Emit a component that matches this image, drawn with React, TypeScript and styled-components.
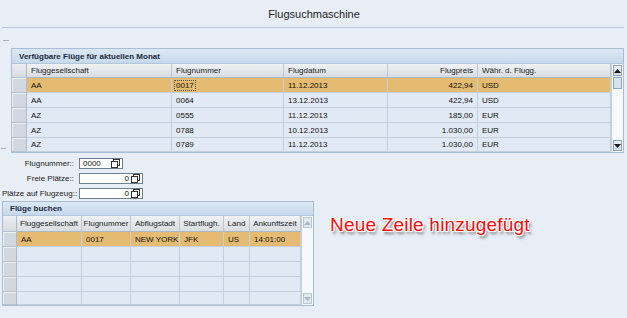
import React from "react";
import styled, { createGlobalStyle, css } from "styled-components";

const Global = createGlobalStyle`
  html, body { margin: 0; padding: 0; }
  body {
    background: #e8eef5;
    font-family: "Liberation Sans", Arial, sans-serif;
    width: 627px;
    height: 318px;
    overflow: hidden;
  }
`;

const Page = styled.div`
  display: flex;
  flex-direction: column;
  width: 627px;
  height: 318px;
`;

const TitleBar = styled.div`
  height: 27px;
  margin: 0 3px 0 2px;
  border-bottom: 1px solid #b7c8da;
  display: flex;
  align-items: center;
  justify-content: center;
  font-size: 11px;
  color: #222;
  padding-left: 2px;
`;

const Dash = styled.div<{ $w?: number }>`
  width: ${(p) => p.$w ?? 6}px;
  height: 1px;
  background: #a9b4bf;
`;

const TopDashRow = styled.div`
  height: 20px;
  padding-left: 3px;
  display: flex;
  align-items: flex-end;
  box-sizing: border-box;
  & > div { margin-bottom: 7px; }
`;

const PanelRow = styled.div`
  display: flex;
  align-items: flex-end;
`;

const Gutter = styled.div`
  width: 11px;
  display: flex;
  align-items: flex-end;
  padding-left: 1px;
  box-sizing: border-box;
  padding-bottom: 4px;
`;

const Panel = styled.div<{ $w: number }>`
  width: ${(p) => p.$w}px;
  box-sizing: border-box;
  border: 1px solid #a9bed4;
  background: #f2f6fa;
`;

const PanelTitle = styled.div<{ $h: number }>`
  height: ${(p) => p.$h}px;
  display: flex;
  align-items: center;
  padding-left: 7px;
  font-size: 8px;
  font-weight: bold;
  color: #1b2a3a;
  background: linear-gradient(#dbe8f5, #c6d9ec);
  border-bottom: 1px solid #b3c7dc;
`;

const PanelBody = styled.div`
  display: flex;
`;

const Grid = styled.div<{ $cols: string }>`
  flex: 1;
  display: grid;
  grid-template-columns: ${(p) => p.$cols};
`;

const HeadCell = styled.div<{ $h: number; $right?: boolean; $center?: boolean }>`
  height: ${(p) => p.$h}px;
  box-sizing: border-box;
  display: flex;
  align-items: center;
  justify-content: ${(p) => (p.$right ? "flex-end" : p.$center ? "center" : "flex-start")};
  padding: 0 4px;
  font-size: 8px;
  color: #222;
  background: linear-gradient(#f0f2f4, #d8dde2);
  border-right: 1px solid #bcc6d0;
  border-bottom: 1px solid #aab8c6;
  white-space: nowrap;
  overflow: hidden;
`;

const Cell = styled.div<{ $sel?: boolean; $right?: boolean; $h: number }>`
  height: ${(p) => p.$h}px;
  box-sizing: border-box;
  display: flex;
  align-items: center;
  justify-content: ${(p) => (p.$right ? "flex-end" : "flex-start")};
  padding: 0 4px;
  font-size: 8px;
  color: #111;
  background: ${(p) => (p.$sel ? "#e4bb70" : "#e1eaf4")};
  border-right: 1px solid #c4d0dc;
  border-bottom: 1px solid #c4d0dc;
  white-space: nowrap;
  overflow: hidden;
`;

const SelCell = styled.div<{ $h: number; $head?: boolean }>`
  height: ${(p) => p.$h}px;
  box-sizing: border-box;
  background: ${(p) => (p.$head ? "linear-gradient(#eceff2, #d6dbe0)" : "#d2d8df")};
  border-right: 1px solid #aebbc8;
  border-bottom: 1px solid #b6c2ce;
  ${(p) =>
    !p.$head &&
    css`
      box-shadow: inset 1px 1px 0 #eef1f4;
    `}
`;

const Focus = styled.span`
  outline: 1px dotted #555;
  outline-offset: 0px;
  padding: 0 1px;
  margin-left: -1px;
`;

const Scroll = styled.div`
  width: 12px;
  display: flex;
  flex-direction: column;
  background: #f6f9fc;
  border-left: 1px solid #c3d0dc;
  box-sizing: border-box;
`;

const ScrollBtn = styled.div<{ $dim?: boolean }>`
  height: 11px;
  margin: 1px;
  box-sizing: border-box;
  border: 1px solid ${(p) => (p.$dim ? "#b9c8d6" : "#8fa6bd")};
  background: ${(p) => (p.$dim ? "#dfe7ef" : "linear-gradient(#eef3f8, #cfdbe7)")};
  display: flex;
  align-items: center;
  justify-content: center;
`;

const Thumb = styled.div`
  height: 12px;
  margin: 0 1px;
  box-sizing: border-box;
  border: 1px solid #8fa6bd;
  background: #d6e2ee;
`;

const Track = styled.div`
  flex: 1;
`;

const Arrow = ({ down, dim }: { down?: boolean; dim?: boolean }) => (
  <svg width="7" height="4" viewBox="0 0 7 4">
    <polygon
      points={down ? "0,0 7,0 3.5,4" : "0,4 7,4 3.5,0"}
      fill={dim ? "#a9b8c7" : "#1a1a1a"}
    />
  </svg>
);

const CopyIcon = () => (
  <svg width="9" height="9" viewBox="0 0 9 9">
    <rect x="2.5" y="0.5" width="6" height="6" fill="#fff" stroke="#333" />
    <rect x="0.5" y="2.5" width="6" height="6" fill="#fff" stroke="#333" />
  </svg>
);

const Form = styled.div`
  display: grid;
  grid-template-columns: 74px auto;
  column-gap: 5px;
  row-gap: 4px;
  padding-top: 5px;
  justify-content: start;
  align-items: center;
`;

const Label = styled.div`
  font-size: 8px;
  color: #222;
  text-align: right;
  white-space: nowrap;
  padding-left: 2px;
`;

const Field = styled.div<{ $w: number; $right?: boolean }>`
  width: ${(p) => p.$w}px;
  height: 11px;
  box-sizing: border-box;
  border: 1px solid #6f7f8f;
  background: #fff;
  display: flex;
  align-items: center;
  justify-content: ${(p) => (p.$right ? "flex-end" : "space-between")};
  gap: 2px;
  padding: 0 2px 0 3px;
  font-size: 8px;
  color: #111;
`;

const Bottom = styled.div`
  display: flex;
  align-items: flex-start;
  padding-top: 2px;
  padding-left: 2px;
`;

const Note = styled.div`
  margin-left: 16px;
  margin-top: 13px;
  font-size: 19px;
  letter-spacing: 0.2px;
  color: #ff0a0a;
  white-space: nowrap;
  text-shadow: -1px -1px 0 #fff, 1px -1px 0 #fff, -1px 1px 0 #fff, 1px 1px 0 #fff,
    0 -1px 0 #fff, 0 1px 0 #fff, -1px 0 0 #fff, 1px 0 0 #fff,
    2px 3px 3px rgba(0, 0, 0, 0.55);
`;

type Col = { label: string; right?: boolean; center?: boolean };

const topCols: Col[] = [
  { label: "Fluggesellschaft" },
  { label: "Flugnummer" },
  { label: "Flugdatum" },
  { label: "Flugpreis", right: true },
  { label: "Währ. d. Flugg." },
];

const topRows = [
  ["AA", "0017", "11.12.2013", "422,94", "USD"],
  ["AA", "0064", "13.12.2013", "422,94", "USD"],
  ["AZ", "0555", "11.12.2013", "185,00", "EUR"],
  ["AZ", "0788", "10.12.2013", "1.030,00", "EUR"],
  ["AZ", "0789", "11.12.2013", "1.030,00", "EUR"],
];

const botCols: Col[] = [
  { label: "Fluggesellschaft", center: true },
  { label: "Flugnummer", center: true },
  { label: "Abflugstadt", center: true },
  { label: "Startflugh.", center: true },
  { label: "Land", center: true },
  { label: "Ankunftszeit", center: true },
];

const botRows = [
  ["AA", "0017", "NEW YORK", "JFK", "US", "14:01:00"],
  ["", "", "", "", "", ""],
  ["", "", "", "", "", ""],
  ["", "", "", "", "", ""],
  ["", "", "", "", "", ""],
];

export default function App() {
  return (
    <Page>
      <Global />
      <TitleBar>Flugsuchmaschine</TitleBar>
      <TopDashRow>
        <Dash $w={6} />
      </TopDashRow>
      <PanelRow>
        <Gutter>
          <Dash $w={5} />
        </Gutter>
        <Panel $w={613}>
          <PanelTitle $h={14}>Verfügbare Flüge für aktuellen Monat</PanelTitle>
          <PanelBody>
            <Grid $cols="15px 145px 112px 104px 90px 1fr">
              <SelCell $h={14} $head />
              {topCols.map((c) => (
                <HeadCell key={c.label} $h={14} $right={c.right}>
                  {c.label}
                </HeadCell>
              ))}
              {topRows.map((r, i) => (
                <React.Fragment key={i}>
                  <SelCell $h={i === 4 ? 14 : 15} />
                  {r.map((v, j) => (
                    <Cell key={j} $h={i === 4 ? 14 : 15} $sel={i === 0} $right={j === 3}>
                      {i === 0 && j === 1 ? <Focus>{v}</Focus> : v}
                    </Cell>
                  ))}
                </React.Fragment>
              ))}
            </Grid>
            <Scroll>
              <ScrollBtn>
                <Arrow />
              </ScrollBtn>
              <Thumb />
              <Track />
              <ScrollBtn>
                <Arrow down />
              </ScrollBtn>
            </Scroll>
          </PanelBody>
        </Panel>
      </PanelRow>
      <Form>
        <Label>Flugnummer::</Label>
        <Field $w={44}>
          <span>0000</span>
          <CopyIcon />
        </Field>
        <Label>Freie Plätze::</Label>
        <Field $w={64} $right>
          <span>0</span>
          <CopyIcon />
        </Field>
        <Label>Plätze auf Flugzeug::</Label>
        <Field $w={64} $right>
          <span>0</span>
          <CopyIcon />
        </Field>
      </Form>
      <Bottom>
        <Panel $w={312}>
          <PanelTitle $h={13}>Flüge buchen</PanelTitle>
          <PanelBody>
            <Grid $cols="14px 65px 49px 49px 44px 26px 1fr">
              <SelCell $h={16} $head />
              {botCols.map((c) => (
                <HeadCell key={c.label} $h={16} $center={c.center}>
                  {c.label}
                </HeadCell>
              ))}
              {botRows.map((r, i) => (
                <React.Fragment key={i}>
                  <SelCell $h={i === 4 ? 13 : 15} />
                  {r.map((v, j) => (
                    <Cell key={j} $h={i === 4 ? 13 : 15} $sel={i === 0}>
                      {v}
                    </Cell>
                  ))}
                </React.Fragment>
              ))}
            </Grid>
            <Scroll>
              <ScrollBtn $dim>
                <Arrow dim />
              </ScrollBtn>
              <Track />
              <ScrollBtn $dim>
                <Arrow down dim />
              </ScrollBtn>
            </Scroll>
          </PanelBody>
        </Panel>
        <Note>Neue Zeile hinzugefügt</Note>
      </Bottom>
    </Page>
  );
}
